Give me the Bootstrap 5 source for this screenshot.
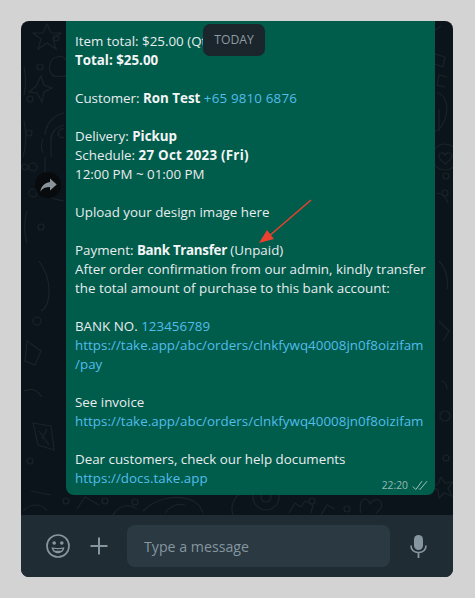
<!DOCTYPE html>
<html lang="en">
<head>
<meta charset="utf-8">
<title>Chat</title>
<link href="https://cdn.jsdelivr.net/npm/bootstrap@5.3.0/dist/css/bootstrap.min.css" rel="stylesheet">
<style>
html,body{height:100%}
body{background:#d3d3d3;font-family:"Open Sans","Noto Sans",sans-serif;overflow:hidden}
.wa-frame{margin:21px 22px 21px 21px;height:556px;border-radius:8px;overflow:hidden;background:#0b141a}
.wa-chat{height:494px;position:relative;overflow:hidden}
.wa-doodle{position:absolute;inset:0;width:100%;height:100%}
.wa-row{position:relative;height:100%;padding-left:14px}
.wa-fwd{width:26px;height:26px;margin-top:151px;margin-right:5px;background:#070b0e;flex:none}
.wa-bubble{flex:none;width:369px;height:474px;background:#005c4b;color:#e9edef;border-radius:0 0 8px 8px;padding:11px 9px 0;font-size:13.35px;line-height:19px}
.wa-bubble b{font-weight:700;color:#f3f5f6}
.wa-bubble a{color:#53bdeb;text-decoration:none;letter-spacing:.04px}
.wa-bubble a.wa-phone{letter-spacing:.18px}
.wa-bubble b.wa-tight{letter-spacing:-.3px}
.wa-bubble b.wa-wide{letter-spacing:.25px}
.wa-line{height:19px;white-space:nowrap}
.wa-meta{font-size:10.3px;line-height:15px;color:rgba(233,237,239,.65);margin-top:-10px;margin-right:-2px}
.wa-pill{position:absolute;top:3px;left:182px;width:62px;height:32px;background:#1b252c;color:#8f9ca3;border-radius:7px;font-size:12.2px}
.wa-foot{height:62px;background:#202c33;padding:0 18px 0 25px}
.wa-plus{margin-left:20px}
.wa-input{width:263px;height:42px;background:#2a3942;border-radius:8px;color:#8696a0;font-size:14.2px;padding:1px 0 0 17px;margin-left:19px;margin-right:20px}
.wa-arrow{position:absolute;left:238px;top:177px;overflow:visible}
</style>
</head>
<body>
<div class="wa-frame d-flex flex-column">
  <div class="wa-chat">
    <svg class="wa-doodle" viewBox="0 0 432 494" fill="none" stroke="#1a2329" stroke-width="1.2" aria-hidden="true">
      <path d="M26 3l4 9 10 0-8 6 3 10-9-6-9 6 3-10-8-6 10 0z"/>
      <path d="M29 43c2-8 12-10 16-4 6-3 8 5 4 10 0 6-6 7-11 6-7 3-11-6-9-12z"/>
      <path d="M20 55l3 9 8 3-8 4-2 10-5-9-8-1 7-6z"/>
      <circle cx="19" cy="46" r="3"/><circle cx="9" cy="78" r="3"/><circle cx="8" cy="112" r="3"/><circle cx="4" cy="146" r="3"/><circle cx="35" cy="17" r="3"/>
      <path d="M43 92c-10 2-18 10-19 22M43 104c-8 2-13 8-13 14M43 108c-5-1-7 4-5 7 1 2 3 2 5 1"/>
      <path d="M22 118c-2 4-2 10 0 14M24 136v32c0 8 8 10 19 12M30 116v20"/>
      <circle cx="12" cy="146" r="4"/><circle cx="12" cy="172" r="4"/>
      <path d="M3 46c2 10 2 20 0 28M3 100c3 14 2 26-1 36"/>
      <circle cx="20" cy="206" r="3"/>
      <path d="M6 190c-3 10-3 22 0 32M18 240c6 8 10 18 10 30s-4 18-8 20"/>
      <circle cx="16" cy="300" r="4"/><path d="M6 320l14 10-6 14-10-4zM3 370c8-4 14 0 18 6M12 402l18 3 3 24-16-5zM18 410l10 14M26 408l-5 10"/>
      <circle cx="9" cy="440" r="3"/><circle cx="45" cy="480" r="3"/>
      <path d="M2 490c8-8 18-8 24 0M10 470l20 4"/>
      <path d="M56 488l8-12 14 8M92 494c6-10 16-12 24-6"/>
      <circle cx="84" cy="480" r="3"/><circle cx="114" cy="481" r="3"/>
      <path d="M122 490c12-12 34-18 50-10 4 2 8 6 10 12M144 492c4-6 12-10 20-8"/>
      <path d="M212 494c-4-12 4-22 14-24"/>
      <circle cx="245" cy="476" r="13"/><circle cx="245" cy="476" r="5"/>
      <circle cx="291" cy="480" r="3"/><circle cx="326" cy="488" r="3"/>
      <path d="M268 492l6-10 6 4 4-6 8 4-2 8M300 494l6-10 8 4"/>
      <path d="M340 492c-2-8 0-14 4-14 2 0 4 2 5 5 3-5 9-6 11-2 2 5-2 9-5 11"/>
      <path d="M420 5c-8 6-10 6-13 0M424 36l-10-3-6 8 14 5zM426 56l-8-2-2 10 8 2M416 72c6 0 10 8 10 16s-6 22-12 22M418 88v22"/>
      <circle cx="424" cy="136" r="13"/><path d="M418 134c2-4 6-2 6 1 0-3 5-5 7-1 1 4-5 7-7 9-2-2-7-5-6-9z"/>
      <circle cx="425" cy="155" r="3"/><circle cx="424" cy="172" r="3"/><path d="M415 172c6 0 10 4 12 10"/>
      <circle cx="425" cy="437" r="3"/>
      <path d="M420 456l4 6 8-1-5 6 4 8-8-3-5 5-1-8-7-3 7-3z"/>
      <circle cx="424" cy="395" r="5"/><path d="M418 240c6 6 10 18 8 28M418 300l10 10-6 10M420 360c4 0 6 4 6 8"/>
    </svg>
    <div class="wa-row d-flex align-items-start">
      <div class="wa-fwd rounded-circle d-flex align-items-center justify-content-center">
        <svg width="17" height="15" viewBox="0 0 17 15" aria-hidden="true"><path fill="#8a9399" d="M10 0.5l6.700 6-6.700 6V9c-4.600 0-7.700 1.300-9.600 4.500C1 9 3.800 5 10 4z"/></svg>
      </div>
      <div class="wa-bubble">
        <div class="wa-line">Item total: $25.00 (Qty: 1)</div>
        <div class="wa-line"><b>Total: $25.00</b></div>
        <div class="wa-line"></div>
        <div class="wa-line">Customer: <b>Ron Test</b> <a class="wa-phone" href="#">+65 9810 6876</a></div>
        <div class="wa-line"></div>
        <div class="wa-line">Delivery: <b>Pickup</b></div>
        <div class="wa-line">Schedule: <b class="wa-wide">27 Oct 2023 (Fri)</b></div>
        <div class="wa-line">12:00 PM ~ 01:00 PM</div>
        <div class="wa-line"></div>
        <div class="wa-line">Upload your design image here</div>
        <div class="wa-line"></div>
        <div class="wa-line">Payment: <b class="wa-tight">Bank Transfer</b> (Unpaid)</div>
        <div class="wa-line">After order confirmation from our admin, kindly transfer</div>
        <div class="wa-line">the total amount of purchase to this bank account:</div>
        <div class="wa-line"></div>
        <div class="wa-line">BANK NO. <a href="#">123456789</a></div>
        <div class="wa-line"><a href="#">https://take.app/abc/orders/clnkfywq40008jn0f8oizifam</a></div>
        <div class="wa-line"><a href="#">/pay</a></div>
        <div class="wa-line"></div>
        <div class="wa-line">See invoice</div>
        <div class="wa-line"><a href="#">https://take.app/abc/orders/clnkfywq40008jn0f8oizifam</a></div>
        <div class="wa-line"></div>
        <div class="wa-line">Dear customers, check our help documents</div>
        <div class="wa-line"><a href="#">https://docs.take.app</a></div>
        <div class="wa-meta d-flex justify-content-end align-items-center gap-1">
          <span>22:20</span>
          <svg width="16" height="11" viewBox="0 0 16 11" fill="none" stroke="#a3c0b9" stroke-width="1" aria-hidden="true"><path d="M0.800 6.500l3 3L10 1.200M7 8.500l1 1L15 1.200"/></svg>
        </div>
      </div>
    </div>
    <div class="wa-pill d-flex align-items-center justify-content-center">TODAY</div>
    <svg class="wa-arrow" width="60" height="48" viewBox="0 0 60 48" aria-hidden="true"><path d="M52 2L9 39" stroke="#e8412f" stroke-width="1.6" fill="none"/><path d="M0 45L8 32l7 9z" fill="#e8412f"/></svg>
  </div>
  <div class="wa-foot d-flex align-items-center">
    <svg width="24" height="24" viewBox="0 0 24 24" fill="none" aria-hidden="true">
      <circle cx="12" cy="12" r="11" stroke="#8696a0" stroke-width="1.7"/>
      <circle cx="8.200" cy="9" r="1.800" fill="#8696a0"/><circle cx="15.800" cy="9" r="1.800" fill="#8696a0"/>
      <path d="M5.600 13.200c3.500 1 9.300 1 12.800 0-.3 3.800-3 6-6.400 6s-6.100-2.200-6.400-6z" fill="#8696a0"/>
      <path d="M7.500 14.800c2.800.5 6.200.5 9 0-.2.800-.5 1.300-.9 1.700-2.200.3-5 .3-7.200 0-.4-.4-.7-.9-.9-1.700z" fill="#202c33"/>
    </svg>
    <svg class="wa-plus" width="18" height="18" viewBox="0 0 18 18" aria-hidden="true"><path d="M8 0.500h2V8h7.500v2H10v7.500H8V10H0.500V8H8z" fill="#8696a0"/></svg>
    <div class="wa-input d-flex align-items-center">Type a message</div>
    <svg width="17" height="23" viewBox="0 0 17 23" aria-hidden="true">
      <rect x="4" y="0" width="9" height="15" rx="4.500" fill="#8696a0"/>
      <path d="M1 10.500c0 4.500 3.200 7 7.500 7s7.500-2.500 7.500-7" fill="none" stroke="#8696a0" stroke-width="1.700"/>
      <rect x="7.600" y="17" width="1.800" height="6" fill="#8696a0"/>
    </svg>
  </div>
</div>
<script src="https://cdn.jsdelivr.net/npm/bootstrap@5.3.0/dist/js/bootstrap.bundle.min.js"></script>
</body>
</html>
